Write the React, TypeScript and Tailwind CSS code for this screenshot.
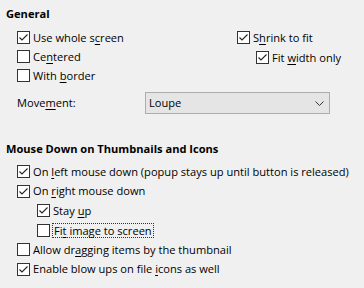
import React from 'react';

const Check: React.FC<{ checked?: boolean }> = ({ checked }) => (
  <span className="flex h-[13px] w-[13px] shrink-0 items-center justify-center border border-[#333333] bg-white">
    {checked && (
      <svg width="11" height="11" viewBox="0 0 11 11">
        <path d="M1.5 5.5 L4 8 L9.5 2.5" fill="none" stroke="#222" strokeWidth="1.1" />
      </svg>
    )}
  </span>
);

const U: React.FC<{ children: React.ReactNode }> = ({ children }) => <span className="underline underline-offset-[2px]">{children}</span>;

const Row: React.FC<{ checked?: boolean; className?: string; children: React.ReactNode }> = ({ checked, className, children }) => (
  <div className={`flex items-center gap-[3px] ${className ?? ''}`}>
    <Check checked={checked} />
    <span className="whitespace-nowrap">{children}</span>
  </div>
);

export default function App() {
  return (
    <div className="h-[288px] w-[364px] overflow-hidden bg-[#f0f0f0] text-[11.1px] leading-[16px] text-black" style={{ fontFamily: '"Open Sans", "Noto Sans", sans-serif' }}>
      <div className="pl-[6px] pt-[6px] font-bold">General</div>

      <div className="mt-[6px] flex">
        <div className="w-[237px] pl-[17px]">
          <Row checked className="h-[19px]">Use whole s<U>c</U>reen</Row>
          <Row className="h-[19px]">Ce<U>n</U>tered</Row>
          <Row className="h-[19px]">With <U>b</U>order</Row>
        </div>
        <div>
          <Row checked className="h-[19px]">S<U>h</U>rink to fit</Row>
          <Row checked className="ml-[19px] mt-[1px] h-[19px]">Fit <U>w</U>idth only</Row>
        </div>
      </div>

      <div className="mt-[7px] flex items-center">
        <div className="w-[145px] pl-[17px]">Move<U>m</U>ent:</div>
        <div className="flex h-[22px] w-[185px] items-center justify-between border border-[#adadad] bg-[#e5e5e5] pl-[3px] pr-[5px]">
          <span>Loupe</span>
          <svg width="9" height="5" viewBox="0 0 9 5">
            <path d="M0.5 0.5 L4.5 4.5 L8.5 0.5" fill="none" stroke="#333" strokeWidth="1" />
          </svg>
        </div>
      </div>

      <div className="mt-[27px] pl-[6px] font-bold">Mouse Down on Thumbnails and Icons</div>

      <div className="mt-[5px] pl-[17px]">
        <Row checked className="h-[19.5px]">On <U>l</U>eft mouse down (popup stays up until button is released)</Row>
        <Row checked className="h-[19.5px]">On <U>r</U>ight mouse down</Row>
        <div className="pl-[20px]">
          <Row checked className="h-[19.5px]">Stay <U>u</U>p</Row>
          <div className="flex h-[19.5px] items-center gap-[2px]">
            <Check />
            <span className="whitespace-nowrap border border-dotted border-[#333] px-[1px] leading-[13px]">Fi<U>t</U> image to screen</span>
          </div>
        </div>
        <Row className="h-[19.5px]">Allow dr<U>a</U>gging items by the thumbnail</Row>
        <Row checked className="h-[19.5px]">Enable blow ups on file <U>i</U>cons as well</Row>
      </div>
    </div>
  );
}
